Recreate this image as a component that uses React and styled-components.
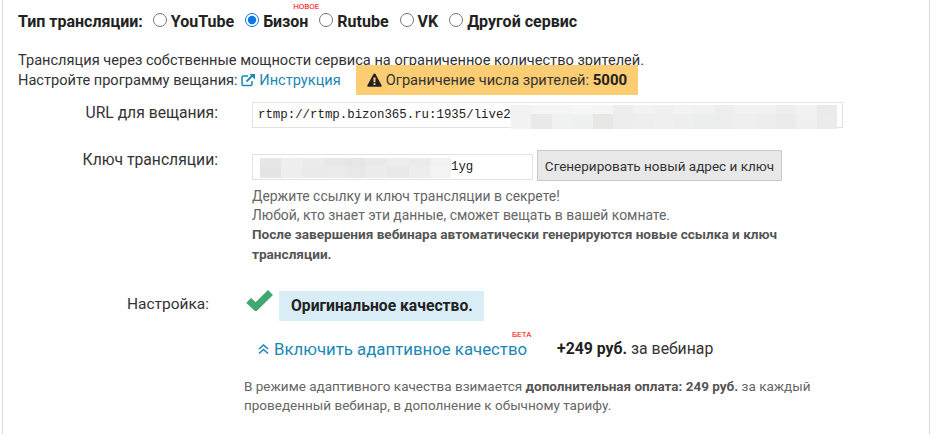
import React from "react";
import styled, { createGlobalStyle } from "styled-components";

const Global = createGlobalStyle`
  html, body { margin: 0; padding: 0; background: #fff; }
  body { font-family: Roboto, "Liberation Sans", sans-serif; color: #222; overflow: hidden; }
`;
const Panel = styled.div`
  box-sizing: border-box;
  width: 928px;
  height: 434px;
  margin-left: 2px;
  border-left: 1px solid #d9d9d9;
  border-right: 1px solid #d9d9d9;
  padding: 11px 0 0 15px;
`;
const TypeRow = styled.div`
  display: flex;
  align-items: center;
  height: 21px;
  font-size: 16px;
  font-weight: 700;
`;
const TypeLabel = styled.span`
  margin-right: 10px;
`;
const RadioOption = styled.label`
  position: relative;
  display: flex;
  align-items: center;
  margin-right: 11px;
`;
const Radio = styled.input`
  width: 14px;
  height: 14px;
  margin: 0 4px 3px 0;
  accent-color: #0b76e8;
`;
const Tiny = styled.span`
  position: absolute;
  left: ${p => p.$left}px;
  top: ${p => p.$top}px;
  color: #f00;
  font-size: 8px;
  font-weight: 400;
  line-height: 8px;
  white-space: nowrap;
`;
const Intro = styled.div`
  margin-top: 18px;
  font-size: 14.6px;
  color: #333;
`;
const IntroLine = styled.div`
  display: flex;
  align-items: center;
  height: 20px;
`;
const Link = styled.a`
  color: #1a87b5;
  display: inline-flex;
  align-items: center;
  gap: 3px;
`;
const LimitBadge = styled.span`
  display: inline-flex;
  align-items: center;
  gap: 4px;
  flex: none;
  height: 30px;
  margin-left: 15px;
  padding: 0 11px;
  background: #fdcd74;
  color: #333;
  b { color: #222; font-size: 15px; }
`;
const FormRow = styled.div`
  display: grid;
  grid-template-columns: 200px 1fr;
  column-gap: 34px;
  margin-top: ${p => p.$mt}px;
`;
const RowLabel = styled.div`
  text-align: right;
  font-size: ${p => p.$size || 15.7}px;
  line-height: 20px;
  color: #333;
  padding-top: ${p => p.$pt || 0}px;
  padding-right: ${p => p.$pr || 0}px;
`;
const TextBox = styled.div`
  box-sizing: border-box;
  position: relative;
  height: 26px;
  width: ${p => p.$w}px;
  margin-top: ${p => p.$mt || 0}px;
  border: 1px solid #e3e3e3;
  background: #fff;
  padding-left: 5px;
  font: 12.4px/24px "Liberation Mono", monospace;
  color: #222;
  flex: none;
`;
const Mosaic = styled.div`
  position: absolute;
  left: ${p => p.$left}px;
  top: ${p => p.$top}px;
  height: ${p => p.$h}px;
  width: ${p => p.$w}px;
  display: flex;
  background: #f4f4f4;
`;
const Cell = styled.i`
  flex: 1;
  background: linear-gradient(to bottom, ${p => p.$a} 38%, ${p => p.$b} 38%);
`;
const KeyLine = styled.div`
  display: flex;
  align-items: flex-start;
  gap: 4px;
`;
const KeyText = styled.span`
  position: absolute;
  left: 198px;
  top: 0;
`;
const GenButton = styled.button`
  box-sizing: border-box;
  height: 31px;
  width: 245px;
  background: #e8e8e8;
  border: 1px solid #c8c8c8;
  font: 13.5px Roboto, sans-serif;
  color: #333;
  padding: 0;
`;
const Note = styled.div`
  margin-top: ${p => p.$mt || 0}px;
  margin-left: ${p => p.$ml || 0}px;
  width: ${p => p.$w}px;
  font-size: ${p => p.$size}px;
  line-height: ${p => p.$lh}px;
  color: #666;
  b { font-weight: 700; color: #555; font-size: ${p => p.$bold}px; }
`;
const SettingsColumn = styled.div`
  margin-left: -7px;
`;
const QualityLine = styled.div`
  display: flex;
  align-items: flex-start;
  gap: 5px;
`;
const QualityBadge = styled.div`
  box-sizing: border-box;
  width: 205px;
  height: 30px;
  margin-top: 2px;
  padding-left: 12px;
  display: flex;
  align-items: center;
  background: #d9edf7;
  font-size: 15.7px;
  font-weight: 700;
  color: #222;
`;
const AdaptiveLine = styled.div`
  position: relative;
  display: flex;
  align-items: center;
  margin: 17px 0 0 13px;
  height: 22px;
  font-size: 16.8px;
`;
const AdaptiveLink = styled.a`
  color: #1a87b5;
  display: inline-flex;
  align-items: center;
  gap: 5px;
  margin-right: 30px;
`;
const Price = styled.span`
  font-size: 15.8px;
  color: #333;
  b { color: #222; }
`;

const urlTop = ["#f4f3f1","#f5f5f3","#f6f5f3","#f7f6f4","#f6f5f3","#eeeded","#f2f2f2","#f0f0f0","#f2f3f3","#f1f2f3","#eeeeee","#f1f2f2","#f2f2f2","#eeeeee","#f2f2f2","#e9eaea"];
const urlBottom = ["#f2f2f2","#e9e9e9","#f0f1f1","#eff0f0","#e7e7e6","#ededed","#eeeeee","#efefef","#eeeeee","#eceded","#ededee","#efefef","#ededed","#ebebeb","#f0f0f0","#ebebeb"];
const keyTop = ["#e7e7e7","#efefef","#ececec","#e8e8e8","#e6e6e6","#eaeaea","#ededed","#ebebeb","#f1f1f1"];
const keyBottom = ["#e5e5e5","#eeeeee","#eaeaea","#ebebeb","#e8e8e8","#ececec","#e9e9e9","#ededed","#f3f3f3"];

const Check = () => (
  <svg width="29" height="22" viewBox="0 0 29 22" style={{ flex: "none" }}>
    <path d="M3.6 11.5 L10.8 18 L25.5 3.5" fill="none" stroke="#41a871" strokeWidth="7" />
  </svg>
);
const External = () => (
  <svg width="15" height="14" viewBox="0 0 15 14" fill="none" stroke="#1a87b5">
    <path d="M11 8v3.2a1.3 1.3 0 0 1-1.3 1.3H2.3A1.3 1.3 0 0 1 1 11.2V4.3A1.3 1.3 0 0 1 2.3 3H7" strokeWidth="1.5" />
    <path d="M5.5 8.5 12.5 1.5" strokeWidth="1.8" />
    <path d="M8.5 1h5.5v5.5z" fill="#1a87b5" stroke="none" />
  </svg>
);
const Warn = () => (
  <svg width="15" height="14" viewBox="0 0 15 14">
    <path fillRule="evenodd" d="M7.5 0.5c.5 0 .9.3 1.1.7l6 11c.4.7-.1 1.6-1 1.6H1.4c-.9 0-1.4-.9-1-1.6l6-11c.2-.4.6-.7 1.1-.7zM6.4 4.5l.2 4.8h1.8l.2-4.8zM6.5 10.3v1.8h2v-1.8z" fill="#222" />
  </svg>
);
const Chevrons = () => (
  <svg width="11" height="12" viewBox="0 0 11 12" fill="none" stroke="#1a87b5" strokeWidth="1.6">
    <path d="M1 6 5.5 2l4.5 4M1 10.5l4.5-4 4.5 4" />
  </svg>
);

export default function App() {
  return (
    <Panel>
      <Global />
      <TypeRow>
        <TypeLabel>Тип трансляции:</TypeLabel>
        <RadioOption><Radio type="radio" name="t" />YouTube</RadioOption>
        <RadioOption><Radio type="radio" name="t" defaultChecked />Бизон<Tiny $left={48} $top={-9}>НОВОЕ</Tiny></RadioOption>
        <RadioOption><Radio type="radio" name="t" />Rutube</RadioOption>
        <RadioOption><Radio type="radio" name="t" />VK</RadioOption>
        <RadioOption><Radio type="radio" name="t" />Другой сервис</RadioOption>
      </TypeRow>
      <Intro>
        <IntroLine>Трансляция через собственные мощности сервиса на ограниченное количество зрителей.</IntroLine>
        <IntroLine>
          Настройте программу вещания:&nbsp;
          <Link><External />Инструкция</Link>
          <LimitBadge><Warn /><span>Ограничение числа зрителей: <b>5000</b></span></LimitBadge>
        </IntroLine>
      </Intro>
      <FormRow $mt={12}>
        <RowLabel $pt={1}>URL для вещания:</RowLabel>
        <TextBox $w={591}>
          rtmp://rtmp.bizon365.ru:1935/live2
          <Mosaic $left={258} $top={2} $h={24} $w={326}>
            {urlTop.map((c, i) => <Cell key={i} $a={c} $b={urlBottom[i]} />)}
          </Mosaic>
        </TextBox>
      </FormRow>
      <FormRow $mt={22}>
        <RowLabel>Ключ трансляции:</RowLabel>
        <div>
          <KeyLine>
            <TextBox $w={281} $mt={4}>
              <Mosaic $left={7} $top={3} $h={20} $w={191}>
                {keyTop.map((c, i) => <Cell key={i} $a={c} $b={keyBottom[i]} />)}
              </Mosaic>
              <KeyText>1yg</KeyText>
            </TextBox>
            <GenButton>Сгенерировать новый адрес и ключ</GenButton>
          </KeyLine>
          <Note $mt={6} $w={540} $size={13.9} $bold={13.6} $lh={19.2}>
            Держите ссылку и ключ трансляции в секрете!<br />
            Любой, кто знает эти данные, сможет вещать в вашей комнате.<br />
            <b>После завершения вебинара автоматически генерируются новые ссылка и ключ трансляции.</b>
          </Note>
        </div>
      </FormRow>
      <FormRow $mt={25}>
        <RowLabel $pt={5} $pr={9} $size={15.5}>Настройка:</RowLabel>
        <SettingsColumn>
          <QualityLine>
            <Check />
            <QualityBadge>Оригинальное качество.</QualityBadge>
          </QualityLine>
          <AdaptiveLine>
            <AdaptiveLink><Chevrons />Включить адаптивное качество</AdaptiveLink>
            <Tiny $left={254} $top={-7}>БЕТА</Tiny>
            <Price><b>+249 руб.</b> за вебинар</Price>
          </AdaptiveLine>
          <Note $mt={17} $ml={-1} $w={600} $size={13.5} $bold={13.5} $lh={19.5}>
            В режиме адаптивного качества взимается <b>дополнительная оплата: 249 руб.</b> за каждый проведенный вебинар, в дополнение к обычному тарифу.
          </Note>
        </SettingsColumn>
      </FormRow>
    </Panel>
  );
}
